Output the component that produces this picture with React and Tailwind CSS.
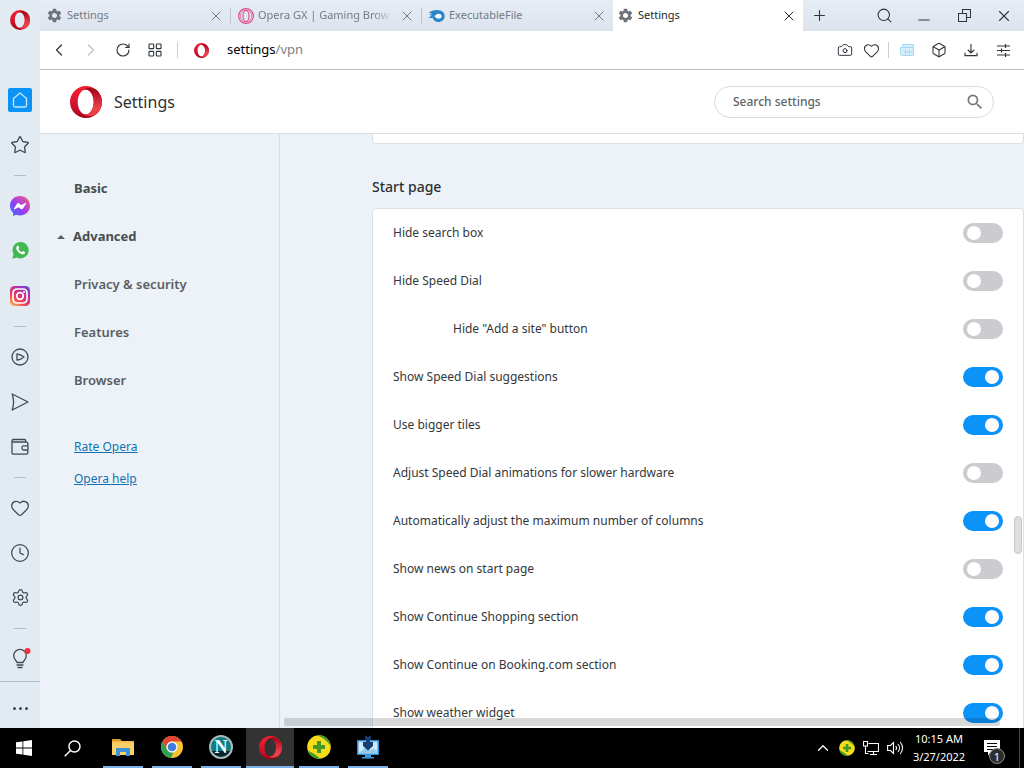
import React, { useState } from 'react';
import {
  Camera,
  ChevronLeft,
  ChevronRight,
  ChevronUp,
  Clock,
  Heart,
  Box,
  LayoutGrid,
  Minus,
  Plus,
  RotateCw,
  Search,
  Settings,
  Star,
  X,
} from 'lucide-react';
import { MdSearch, MdSettings } from 'react-icons/md';

const TABS = [
  { title: 'Settings', icon: 'gear' },
  { title: 'Opera GX | Gaming Brow', icon: 'gx' },
  { title: 'ExecutableFile', icon: 'file' },
  { title: 'Settings', icon: 'gear', active: true },
];

const OPTIONS = [
  { id: 'hide-search', label: 'Hide search box', on: false },
  { id: 'hide-dial', label: 'Hide Speed Dial', on: false },
  { id: 'hide-add', label: 'Hide "Add a site" button', on: false, nested: true },
  { id: 'suggestions', label: 'Show Speed Dial suggestions', on: true },
  { id: 'bigger', label: 'Use bigger tiles', on: true },
  { id: 'animations', label: 'Adjust Speed Dial animations for slower hardware', on: false },
  { id: 'columns', label: 'Automatically adjust the maximum number of columns', on: true },
  { id: 'news', label: 'Show news on start page', on: false },
  { id: 'shopping', label: 'Show Continue Shopping section', on: true },
  { id: 'booking', label: 'Show Continue on Booking.com section', on: true },
  { id: 'weather', label: 'Show weather widget', on: true },
];

function OperaLogo({ size, id }) {
  return (
    <svg width={size} height={size} viewBox="0 0 32 32">
      <defs>
        <linearGradient id={`${id}-l`} x1="0" y1="0" x2="0" y2="1">
          <stop offset="0.2" stopColor="#ee1c31" />
          <stop offset="0.7" stopColor="#c8102a" />
          <stop offset="1" stopColor="#a70014" />
        </linearGradient>
        <linearGradient id={`${id}-r`} x1="0" y1="0" x2="0" y2="1">
          <stop offset="0" stopColor="#9c0014" />
          <stop offset="0.35" stopColor="#c92032" />
          <stop offset="0.7" stopColor="#ea4048" />
        </linearGradient>
      </defs>
      <path
        fill={`url(#${id}-l)`}
        fillRule="evenodd"
        d="M16 0a16 16 0 1 0 0 32 16 16 0 0 0 0-32zM15.700 3.500c4.400 0 8 5.600 8 12.500s-3.600 12.500-8 12.500-8-5.600-8-12.500 3.600-12.500 8-12.500z"
      />
      <path
        fill={`url(#${id}-r)`}
        d="M12 4.800C14 3 16.500 2 19 2c2.900 0 5.600 1 7.700 2.100a16 16 0 0 1 0 23.800C24.600 29 21.900 30 19 30c-2.500 0-5-1-7-2.800 1.100.9 2.400 1.300 3.700 1.300 4.400 0 8-5.600 8-12.500s-3.600-12.500-8-12.500c-1.300 0-2.600.4-3.700 1.300z"
      />
    </svg>
  );
}

function GxIcon() {
  return (
    <svg width="16" height="16" viewBox="0 0 16 16" fill="none" stroke="#e0508a">
      <circle cx="8" cy="8" r="7.400" strokeWidth="1.200" />
      <circle cx="8" cy="8" r="5.800" strokeWidth="0.700" />
      <ellipse cx="8" cy="8" rx="3" ry="5.600" strokeWidth="1.200" />
    </svg>
  );
}

function FileIcon() {
  return (
    <svg width="17" height="14" viewBox="0 0 17 14">
      <path fill="#2a84cc" d="M1 3.500C4 .8 9 .3 12.500 1.500 15.300 2.500 16.700 4.700 16.700 7c0 3.400-2.700 6-6.300 6-3 0-5.200-1.700-5.700-4.200C3.300 9.200 1.500 9 0 8.200c1.800-.2 3-.8 4.200-1.700C3 6.600 1.800 6 1.300 5.200c1.200.2 2.300 0 3-.4C3.300 4.500 2 4 1 3.500z" />
      <path fill="#f2f7fc" d="M6.500 7.500C7.500 5.500 9 4.600 11 4.700c1.600.1 2.700 1.200 2.700 2.500S12.500 9.800 10.800 9.800 8 8.800 6.500 7.500z" />
    </svg>
  );
}

function TabIcon({ kind }) {
  if (kind === 'gx') return <GxIcon />;
  if (kind === 'file') return <FileIcon />;
  return <MdSettings size={17} className="text-[#6f7479]" />;
}

function HomeIcon() {
  return (
    <svg width="18" height="18" viewBox="0 0 18 18" fill="none" stroke="#c4e8ff" strokeWidth="1.300" strokeLinejoin="round">
      <path d="M9 2 2.800 7.200a1 1 0 0 0-.3.800v6.500a1.500 1.500 0 0 0 1.500 1.500h10a1.500 1.500 0 0 0 1.500-1.500V8a1 1 0 0 0-.3-.800z" />
    </svg>
  );
}

function MessengerIcon() {
  return (
    <svg width="20" height="20" viewBox="0 0 20 20">
      <defs>
        <linearGradient id="msg" x1="0" y1="1" x2="1" y2="0">
          <stop offset="0" stopColor="#2b7bff" />
          <stop offset="0.45" stopColor="#9a3cf0" />
          <stop offset="1" stopColor="#ff5f78" />
        </linearGradient>
      </defs>
      <path fill="url(#msg)" d="M10 0C4.400 0 0 4.100 0 9.700c0 2.900 1.200 5.400 3.100 7.100V20l3-1.200c1.200.4 2.500.6 3.900.6 5.600 0 10-4.100 10-9.700S15.600 0 10 0z" />
      <path fill="#fff" d="m4 12.500 3-4.700c.5-.7 1.400-.9 2.100-.4l2.300 1.700 3.900-2c.500-.3 1 .2.700.7l-3 4.700c-.5.7-1.400.9-2.100.4l-2.300-1.700-3.900 2c-.500.300-1-.2-.7-.7z" />
    </svg>
  );
}

function WhatsAppIcon() {
  return (
    <svg width="17" height="17" viewBox="0 0 17 17">
      <path fill="#3fb950" d="M8.700 0a8.200 8.200 0 0 0-7.100 12.300L.3 16.800l4.600-1.200A8.200 8.200 0 1 0 8.700 0z" />
      <path fill="#fff" d="M5.300 3.900c.4-.4 1-.4 1.200.1l.7 1.600c.1.400-.8 1.200-.7 1.500.6 1.300 1.700 2.300 3.100 2.900.4.100 1.100-1 1.500-.9l1.700.8c.4.200.3 1-.1 1.500-.8.900-2 1-3.200.6-2.500-.8-4.500-2.800-5.200-5-.300-1.200.1-2.400 1-3.100z" />
    </svg>
  );
}

function InstagramIcon() {
  return (
    <svg width="20" height="20" viewBox="0 0 20 20">
      <defs>
        <linearGradient id="ig" x1="0.1" y1="1" x2="0.8" y2="0">
          <stop offset="0" stopColor="#fdb84a" />
          <stop offset="0.35" stopColor="#ef4056" />
          <stop offset="0.7" stopColor="#c030a0" />
          <stop offset="1" stopColor="#6a45d8" />
        </linearGradient>
      </defs>
      <rect width="20" height="20" rx="4.500" fill="url(#ig)" />
      <g fill="none" stroke="#fff" strokeWidth="1.700">
        <rect x="3" y="3" width="14" height="14" rx="4" />
        <circle cx="10" cy="10" r="3.300" />
      </g>
      <circle cx="14" cy="6" r="1.100" fill="#fff" />
    </svg>
  );
}

const line = { fill: 'none', stroke: '#414a52', strokeWidth: 1.3, strokeLinejoin: 'round', strokeLinecap: 'round' };

function PlayerIcon() {
  return (
    <svg width="18" height="18" viewBox="0 0 18 18" {...line}>
      <circle cx="9" cy="9" r="8" />
      <path d="M6 5.800v6.400c2.600-.5 5-1.500 7-3.200-2-1.700-4.400-2.700-7-3.200z" />
    </svg>
  );
}

function SendIcon() {
  return (
    <svg width="18" height="18" viewBox="0 0 18 18" {...line}>
      <path d="M1.200 1 17 9 1.200 17c1.800-5.300 1.800-10.700 0-16z" />
    </svg>
  );
}

function WalletIcon() {
  return (
    <svg width="18" height="18" viewBox="0 0 18 18" {...line}>
      <path d="M16.800 7V5.500a1.500 1.500 0 0 0-1.500-1.500H2.500A1.500 1.500 0 0 1 1 2.700v12A1.500 1.500 0 0 0 2.500 16.200h12.800a1.500 1.500 0 0 0 1.500-1.500V13M1 2.700A1.300 1.300 0 0 1 2.300 1.500h11A1.500 1.500 0 0 1 14.800 3v1" />
      <path d="M17 7.800h-4.500a1.500 1.500 0 0 0-1.500 1.500v1.200A1.500 1.500 0 0 0 12.500 12H17z" />
    </svg>
  );
}

function BulbIcon() {
  return (
    <svg width="22" height="22" viewBox="0 0 22 22" {...line}>
      <path d="M8 14.500c0-1.400-3.300-3-3.300-6.800a6.300 6.300 0 0 1 12.600 0c0 3.800-3.300 5.400-3.300 6.800zM8 17h6M9 19.500h4" />
      <circle cx="18.500" cy="3" r="3" fill="#f0303c" stroke="none" />
    </svg>
  );
}

function DownloadIcon() {
  return (
    <svg width="14" height="13" viewBox="0 0 15 14" fill="none" stroke="#30363b" strokeWidth="1.200">
      <path d="M7.500 0v9.500M4 6.200l3.500 3.500L11 6.200M1 9.500v3h13v-3" />
    </svg>
  );
}

function SlidersIcon() {
  return (
    <svg width="13" height="13" viewBox="0 0 13 13" fill="none" stroke="#30363b" strokeWidth="1.200">
      <path d="M0 2h13M0 6.500h13M0 11h13M8.500 0v4M4.500 4.500v4M8.500 9v4" />
    </svg>
  );
}

function NewsIcon() {
  return (
    <svg width="14" height="12" viewBox="0 0 14 12" fill="none" stroke="#a5d8f2">
      <path fill="#d7effa" d="M2.500.5h11v11h-11a2 2 0 0 1-2-2v-6h2z" />
      <path d="M2.500 3.500h11M5.500 5.500v6M9.500 5.500v6M3.500 8h9" />
    </svg>
  );
}

const SIDEBAR = [
  { name: 'Bookmarks', icon: <Star size={20} strokeWidth={1.6} /> },
  null,
  { name: 'Messenger', icon: <MessengerIcon /> },
  { name: 'WhatsApp', icon: <WhatsAppIcon /> },
  { name: 'Instagram', icon: <InstagramIcon /> },
  null,
  { name: 'Player', icon: <PlayerIcon /> },
  { name: 'My Flow', icon: <SendIcon /> },
  { name: 'Wallet', icon: <WalletIcon /> },
  null,
  { name: 'Favourites', icon: <Heart size={20} strokeWidth={1.5} /> },
  { name: 'History', icon: <Clock size={20} strokeWidth={1.5} /> },
  { name: 'Settings', icon: <Settings size={19} strokeWidth={1.6} /> },
  null,
  { name: 'Tips', icon: <BulbIcon /> },
];

function Sidebar() {
  return (
    <aside className="flex w-10 shrink-0 flex-col bg-[#e3ebf2] text-[#414a52]">
      <button aria-label="Opera menu" className="flex h-10 shrink-0 items-center justify-center">
        <OperaLogo size={20} id="menu" />
      </button>
      <nav className="flex flex-1 flex-col pt-[37px]">
        <button aria-label="Home" className="flex h-[45px] shrink-0 items-center justify-center">
          <span className="flex size-6 items-center justify-center rounded-xs bg-[#0b93f8]">
            <HomeIcon />
          </span>
        </button>
        {SIDEBAR.map((item, i) =>
          item ? (
            <button key={item.name} aria-label={item.name} className="flex h-[45px] shrink-0 items-center justify-center">
              {item.icon}
            </button>
          ) : (
            <div key={i} className="flex h-4 shrink-0 items-center justify-center">
              <span className="h-px w-3 bg-[#b3bdc6]" />
            </div>
          )
        )}
      </nav>
      <button aria-label="More" className="flex h-[47px] shrink-0 items-center justify-center gap-[3px] border-t border-[#aebfcd] pt-1.5">
        <span className="size-[3px] rounded-full bg-[#414a52]" />
        <span className="size-[3px] rounded-full bg-[#414a52]" />
        <span className="size-[3px] rounded-full bg-[#414a52]" />
      </button>
    </aside>
  );
}

function TabBar() {
  return (
    <div className="flex h-[31px] shrink-0 bg-linear-to-b from-[#e6edf5] to-[#dce3ed]">
      <div className="flex min-w-0">
        {TABS.map((tab, i) => (
          <div
            key={i}
            className={
              tab.active
                ? 'flex w-[190px] items-center gap-1 bg-white px-1 text-[#23282c]'
                : 'flex w-[191px] items-center gap-1 pr-1 pl-1.5 text-[#737b84]'
            }
          >
            <span className="flex w-[17px] shrink-0 justify-center">
              <TabIcon kind={tab.icon} />
            </span>
            <button
              className={
                tab.icon === 'gx'
                  ? 'min-w-0 flex-1 mask-r-from-85% text-left text-[11px] whitespace-nowrap'
                  : 'min-w-0 flex-1 text-left text-[11px] whitespace-nowrap'
              }
            >
              {tab.title}
            </button>
            <button aria-label={`Close ${tab.title}`} className="flex w-5 shrink-0 justify-center">
              <X size={16} strokeWidth={1.5} />
            </button>
            {i < 2 && <span className="-mr-1 h-4 w-px shrink-0 bg-[#bcc5cf]" />}
          </div>
        ))}
      </div>
      <button aria-label="New tab" className="flex w-8 shrink-0 items-center justify-center text-[#30363b]">
        <Plus size={17} strokeWidth={1.5} />
      </button>
      <div className="ml-auto flex shrink-0 text-[#30363b]">
        <button aria-label="Search tabs" className="flex w-10 items-center justify-center">
          <Search size={17} strokeWidth={1.5} />
        </button>
        <button aria-label="Minimize" className="flex w-10 items-center justify-center pt-2">
          <Minus size={18} strokeWidth={1.4} />
        </button>
        <button aria-label="Restore" className="flex w-10 items-center justify-center">
          <svg width="13" height="13" viewBox="0 0 13 13" fill="none" stroke="currentColor" strokeWidth="1.100">
            <path d="M.5 4.500h8v8h-8zM4.500 4.500v-4h8v8h-4" />
          </svg>
        </button>
        <button aria-label="Close window" className="flex w-10 items-center justify-center">
          <X size={18} strokeWidth={1.5} />
        </button>
      </div>
    </div>
  );
}

function AddressBar() {
  return (
    <div className="flex h-[39px] shrink-0 items-center border-b border-[#b9bcbf] bg-white pr-[5px] pl-[3px] text-[#30363b]">
      <button aria-label="Back" className="flex w-8 justify-center">
        <ChevronLeft size={20} strokeWidth={1.5} />
      </button>
      <button aria-label="Forward" className="flex w-8 justify-center text-[#c0c4c8]">
        <ChevronRight size={20} strokeWidth={1.5} />
      </button>
      <button aria-label="Reload" className="flex w-8 justify-center">
        <RotateCw size={16} strokeWidth={1.7} />
      </button>
      <button aria-label="Speed dial" className="flex w-8 justify-center">
        <LayoutGrid size={16} strokeWidth={1.7} />
      </button>
      <span className="mr-4 ml-1.5 h-4 w-px bg-[#c9cdd1]" />
      <OperaLogo size={15} id="badge" />
      <div className="ml-[18px] flex-1 text-[13px]">
        <span className="text-black">settings</span>
        <span className="text-[#7b8287]">/vpn</span>
      </div>
      <button aria-label="Snapshot" className="flex w-[26px] justify-center">
        <Camera size={16} strokeWidth={1.5} />
      </button>
      <button aria-label="Add to bookmarks" className="flex w-[26px] justify-center">
        <Heart size={17} strokeWidth={1.5} />
      </button>
      <span className="mr-0.5 ml-1 h-4 w-px bg-[#c9cdd1]" />
      <button aria-label="News" className="flex w-8 justify-center">
        <NewsIcon />
      </button>
      <button aria-label="Extensions" className="flex w-8 justify-center">
        <Box size={16} strokeWidth={1.6} />
      </button>
      <button aria-label="Downloads" className="flex w-8 justify-center">
        <DownloadIcon />
      </button>
      <button aria-label="Easy setup" className="flex w-8 justify-center">
        <SlidersIcon />
      </button>
    </div>
  );
}

function SettingsHeader() {
  return (
    <header className="flex h-16 shrink-0 items-center border-b border-[#d8dfe5] bg-white px-[30px]">
      <OperaLogo size={32} id="page" />
      <h1 className="ml-3 flex-1 text-base text-[#2c3033]">Settings</h1>
      <div className="flex h-8 w-[280px] items-center rounded-full border border-[#d9dcdf] pr-2 pl-[18px]">
        <input
          type="text"
          aria-label="Search settings"
          placeholder="Search settings"
          className="min-w-0 flex-1 bg-transparent text-xs font-medium text-[#4f5458] outline-none placeholder:text-[#5e6367]"
        />
        <MdSearch size={20} className="text-[#74787b]" />
      </div>
    </header>
  );
}

function SettingsNav() {
  return (
    <nav className="w-60 shrink-0 border-r border-[#d6dee6] pt-[31px] pl-[34px] text-[13px] text-[#595e63]">
      <a href="#basic" className="flex h-12 items-center font-bold text-[#484d51]">Basic</a>
      <a href="#advanced" className="-ml-[17px] flex h-12 items-center gap-2 font-bold text-[#484d51]">
        <span className="border-x-4 border-b-4 border-x-transparent border-b-[#595e63]" />
        Advanced
      </a>
      <a href="#privacy" className="flex h-12 items-center font-semibold">Privacy &amp; security</a>
      <a href="#features" className="flex h-12 items-center font-semibold">Features</a>
      <a href="#browser" className="flex h-12 items-center font-semibold">Browser</a>
      <div className="mt-[26px] text-xs text-[#1272b0] underline">
        <a href="#rate" className="flex h-8 items-center">Rate Opera</a>
        <a href="#help" className="flex h-8 items-center">Opera help</a>
      </div>
    </nav>
  );
}

function OptionRow({ option, checked, onChange }) {
  return (
    <label
      className={
        option.nested
          ? 'flex h-12 items-center justify-between pr-5 pl-20'
          : 'flex h-12 items-center justify-between px-5'
      }
    >
      <span>{option.label}</span>
      <input
        type="checkbox"
        role="switch"
        checked={checked}
        onChange={onChange}
        className="flex h-5 w-10 shrink-0 appearance-none items-center rounded-full bg-[#cccbd0] px-1 before:size-3.5 before:rounded-full before:bg-white checked:justify-end checked:bg-[#0b93f8]"
      />
    </label>
  );
}

function StartPageSection() {
  const [values, setValues] = useState(() => Object.fromEntries(OPTIONS.map((o) => [o.id, o.on])));

  const toggle = (id) => setValues((prev) => ({ ...prev, [id]: !prev[id] }));

  return (
    <main className="relative min-w-0 flex-1 overflow-hidden pl-[92px]">
      <div className="h-2.5 rounded-b-sm border border-t-0 border-[#dae1e6] bg-white" />
      <h2 className="mt-8 mb-2.5 text-sm leading-[22px] font-medium text-[#2c3033]">Start page</h2>
      <section className="rounded-t-sm border border-[#dae1e6] bg-white text-xs text-[#33373a]">
        {OPTIONS.map((option) => (
          <OptionRow
            key={option.id}
            option={option}
            checked={values[option.id]}
            onChange={() => toggle(option.id)}
          />
        ))}
      </section>
      <div className="absolute right-6 bottom-0.5 left-1 h-2 rounded-xs bg-black/15" />
      <div className="absolute right-0.5 bottom-[174px] h-[38px] w-2 rounded-full border border-[#c5c8ca] bg-[#dcdedf]" />
    </main>
  );
}

function ExplorerIcon() {
  return (
    <svg width="22" height="18" viewBox="0 0 22 18">
      <path fill="#d99a2c" d="M0 1h8l2 2H0z" />
      <path fill="#fbd067" d="M0 3h22v14H0z" />
      <path fill="#f3bb48" d="M0 3h22v1.500H0z" />
      <path fill="#3d93d6" d="M4 10h14v8h-4v-4H8v4H4z" />
    </svg>
  );
}

function ChromeIcon() {
  return (
    <svg width="22" height="22" viewBox="0 0 22 22">
      <circle cx="11" cy="11" r="11" fill="#f7c331" />
      <path fill="#e04435" d="M1.500 5.500a11 11 0 0 1 19 0H11a5.500 5.500 0 0 0-4.800 8.200z" />
      <path fill="#2f9f55" d="M1.500 5.500 6.200 13.700A5.500 5.500 0 0 0 11 16.500h1.500L9.800 21.900A11 11 0 0 1 1.500 5.500z" />
      <circle cx="11" cy="11" r="5.500" fill="#fff" />
      <circle cx="11" cy="11" r="4.300" fill="#3f7de0" />
    </svg>
  );
}

function NetscapeIcon() {
  return (
    <span className="flex size-6 items-center justify-center rounded-full border-2 border-[#a9babd] bg-linear-to-b from-[#0d7d80] from-70% to-[#06262b] to-70% font-['Liberation_Serif',serif] text-lg leading-none font-bold text-white">
      N
    </span>
  );
}

function PlusBadge({ size }) {
  return (
    <svg width={size} height={size} viewBox="0 0 24 24">
      <circle cx="12" cy="12" r="11.800" fill="#f7dc1c" />
      <path fill="#3d9c2c" d="M10 .4A11.800 11.800 0 0 1 23.700 11C20 5.500 16 2.500 10 .4zM.8 15.500c4 2 8 4 12.500 8.200A11.800 11.800 0 0 1 .8 15.500z" />
      <path fill="#42992a" d="M10 6h4v4h4v4h-4v4h-4v-4H6v-4h4z" />
    </svg>
  );
}

function InstallerIcon() {
  return (
    <svg width="24" height="24" viewBox="0 0 24 24">
      <path fill="#2d8fd8" d="M1 5h22v15H1z" />
      <path fill="#cfeafa" d="M2.500 6.500h19v12h-19z" />
      <path fill="#91caec" d="m2.500 18.500 8-7 4 4 3-2 4 3v2z" />
      <path fill="#153f75" d="m9 0 3 2.500L15 0v4l-1 1.500V7h3v4l-5 4.500L7 11V7h3V5.500L9 4z" />
      <path fill="#3b99dc" d="M9 20h6v2h3v1.500H6V22h3z" />
    </svg>
  );
}

const APPS = [
  { name: 'File Explorer', icon: <ExplorerIcon /> },
  { name: 'Chrome', icon: <ChromeIcon /> },
  { name: 'Netscape', icon: <NetscapeIcon /> },
  { name: 'Opera', icon: <OperaLogo size={23} id="task" />, active: true },
  { name: 'Security', icon: <PlusBadge size={24} /> },
  { name: 'Installer', icon: <InstallerIcon /> },
];

function Taskbar() {
  return (
    <footer className="flex h-10 shrink-0 bg-black text-white">
      <button aria-label="Start" className="flex w-12 items-center justify-center">
        <svg width="16" height="16" viewBox="0 0 16 16" fill="#fff">
          <path d="M0 2.300 6.500 1.400v6.200H0zM7.300 1.300 16 0v7.600H7.300zM0 8.400h6.500v6.200L0 13.700zM7.300 8.400H16V16l-8.700-1.300z" />
        </svg>
      </button>
      <button aria-label="Search" className="flex w-12 items-center justify-center">
        <svg width="17" height="17" viewBox="0 0 17 17" fill="none" stroke="#fff" strokeWidth="1.400">
          <circle cx="10.500" cy="6.500" r="5.500" />
          <path d="M6.500 10.500.7 16.300" />
        </svg>
      </button>
      <div className="ml-[3px] flex gap-px">
        {APPS.map((app) => (
          <button
            key={app.name}
            aria-label={app.name}
            className={app.active ? 'flex w-12 flex-col items-center bg-[#333333]' : 'flex w-12 flex-col items-center px-1'}
          >
            <span className="flex flex-1 items-center">{app.icon}</span>
            <span className="h-0.5 w-full bg-[#79b2e6]" />
          </button>
        ))}
      </div>
      <div className="ml-auto flex items-center">
        <button aria-label="Hidden icons" className="flex w-6 justify-center">
          <ChevronUp size={18} strokeWidth={1.6} />
        </button>
        <span className="flex w-6 justify-center">
          <PlusBadge size={16} />
        </span>
        <span className="flex w-6 justify-center">
          <svg width="16" height="14" viewBox="0 0 16 14" fill="none" stroke="#fff" strokeWidth="1.100">
            <path d="M5.500 2.500h10v8h-11M2.500 5v7.500h3M7 13.500h7M10.500 10.500v3M.5.500h4V5h-4z" />
          </svg>
        </span>
        <span className="flex w-6 justify-center">
          <svg width="17" height="14" viewBox="0 0 17 14" fill="none" stroke="#fff" strokeWidth="1.100">
            <path d="M.6 4.500h2.900l3-3v11l-3-3H.6zM8.700 5a3 3 0 0 1 0 4M10.900 3a6 6 0 0 1 0 8M13.200 1a9 9 0 0 1 0 12" />
          </svg>
        </span>
        <div className="w-16 text-center text-[11px] leading-[18px] whitespace-nowrap">
          <div>10:15 AM</div>
          <div>3/27/2022</div>
        </div>
        <button aria-label="Notifications" className="relative flex h-10 w-12 items-center justify-center pr-1.5">
          <svg width="16" height="16" viewBox="0 0 16 16">
            <path fill="#fff" d="M0 0h16v12H7l-3 3.500V12H0z" />
            <path stroke="#000" d="M3 3.500h10M3 6.500h10M3 9.500h7" />
          </svg>
          <span className="absolute right-3.5 bottom-1 flex size-4 items-center justify-center rounded-full border border-[#8a8a8a] bg-[#2d2d2d] text-[11px] leading-none">
            1
          </span>
        </button>
        <span className="mr-1 h-10 w-px bg-[#4a4a4a]" />
      </div>
    </footer>
  );
}

export default function App() {
  return (
    <div className="flex h-screen flex-col overflow-hidden bg-[#edf2f8] font-['Noto_Sans','Open_Sans',sans-serif]">
      <div className="flex min-h-0 flex-1">
        <Sidebar />
        <div className="flex min-w-0 flex-1 flex-col">
          <TabBar />
          <AddressBar />
          <SettingsHeader />
          <div className="flex min-h-0 flex-1">
            <SettingsNav />
            <StartPageSection />
          </div>
        </div>
      </div>
      <Taskbar />
    </div>
  );
}
